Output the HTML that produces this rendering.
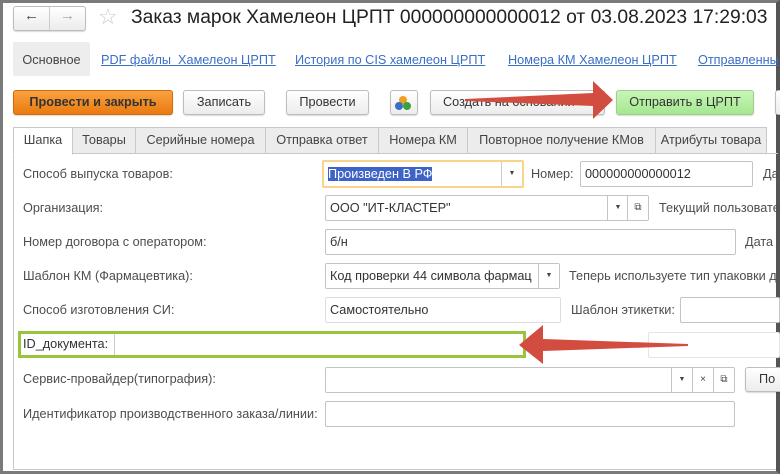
<!DOCTYPE html>
<html><head><meta charset="utf-8"><style>
*{box-sizing:border-box;margin:0;padding:0}
body{width:780px;height:474px;overflow:hidden;background:#fff;font-family:"Liberation Sans",Arial,sans-serif;font-size:12.7px;color:#4d4d4d;position:relative}
.a{position:absolute}
.frame{left:0;top:0;width:780px;height:474px;border:3px solid #7a7a7a;border-right:4px solid #555}
.btn{position:absolute;height:25px;border:1px solid #bdbdbd;border-radius:3px;background:linear-gradient(#fff,#ececec);text-align:center;line-height:23px;color:#333;font-size:12.7px;box-shadow:0 1px 1px rgba(0,0,0,.15);white-space:nowrap;overflow:hidden}
.lnk{position:absolute;top:53px;color:#3a6fc4;text-decoration:underline;font-size:12.7px;white-space:nowrap}
.tab{position:absolute;top:127px;height:27px;border:1px solid #c8c8c8;background:#ececec;line-height:25px;text-align:center;color:#444;white-space:nowrap}
.lbl{position:absolute;font-size:12.7px;color:#4d4d4d;white-space:nowrap}
.inp{position:absolute;height:26px;border:1px solid #c4c4c4;border-radius:2px;background:#fff;line-height:24px;padding-left:4px;color:#333;font-size:12.7px}
.dd{position:absolute;top:0;bottom:0;border-left:1px solid #c4c4c4;width:21px;text-align:center;font-size:7px;line-height:24px;color:#444}
</style></head><body>
<div class="a frame"></div>
<div class="btn" style="left:13px;top:6px;width:73px;height:25px"></div>
<div class="a" style="left:49px;top:7px;width:1px;height:23px;background:#ccc"></div>
<div class="a" style="left:24px;top:7px;font-size:15px;color:#444">&#8592;</div>
<div class="a" style="left:60px;top:7px;font-size:15px;color:#aaa">&#8594;</div>
<div class="a" style="left:98px;top:4px;font-size:22px;color:#ccc">&#9734;</div>
<div class="a" style="left:131px;top:7px;font-size:19.3px;color:#222;white-space:nowrap">Заказ марок Хамелеон ЦРПТ 000000000000012 от 03.08.2023 17:29:03</div>
<div class="a" style="left:13px;top:42px;width:77px;height:34px;background:#ededed;border-radius:2px;line-height:36px;text-align:center;color:#444">Основное</div>
<div class="lnk" style="left:101px">PDF файлы&nbsp; Хамелеон ЦРПТ</div>
<div class="lnk" style="left:295px">История по CIS хамелеон ЦРПТ</div>
<div class="lnk" style="left:508px">Номера КМ Хамелеон ЦРПТ</div>
<div class="lnk" style="left:698px">Отправленны</div>
<div class="btn" style="left:13px;top:90px;width:160px;background:linear-gradient(#f9a23f,#ea7a10);border-color:#d06c0a;font-weight:bold;color:#333">Провести и закрыть</div>
<div class="btn" style="left:183px;top:90px;width:82px">Записать</div>
<div class="btn" style="left:286px;top:90px;width:83px">Провести</div>
<div class="btn" style="left:390px;top:90px;width:28px"></div>
<div class="a" style="left:399px;top:96px;width:8px;height:8px;border-radius:50%;background:#f0a020"></div>
<div class="a" style="left:395px;top:102px;width:8px;height:8px;border-radius:50%;background:#3a6fc4"></div>
<div class="a" style="left:403px;top:102px;width:8px;height:8px;border-radius:50%;background:#3aa040"></div>
<div class="btn" style="left:430px;top:90px;width:175px;text-align:left;padding-left:12px">Создать на основании</div>
<div class="btn" style="left:616px;top:90px;width:138px;background:linear-gradient(#c8f5b8,#a5e890);border-color:#9bcf8a">Отправить в ЦРПТ</div>
<div class="btn" style="left:775px;top:90px;width:10px"></div>
<svg class="a" style="left:0;top:0" width="780" height="474">
<polygon points="465,99 593,93 593,81 613,100 593,119 593,106 465,101" fill="#d24d3f"/>
</svg>
<div class="a" style="left:13px;top:153px;width:1px;height:317px;background:#c8c8c8"></div>
<div class="a" style="left:13px;top:469px;width:763px;height:1px;background:#c8c8c8"></div>
<div class="tab" style="left:72px;width:64px">Товары</div>
<div class="tab" style="left:135px;width:131px">Серийные номера</div>
<div class="tab" style="left:265px;width:114px">Отправка ответ</div>
<div class="tab" style="left:378px;width:90px">Номера КМ</div>
<div class="tab" style="left:467px;width:189px">Повторное получение КМов</div>
<div class="tab" style="left:655px;width:112px">Атрибуты товара</div>
<div class="a" style="left:766px;top:153px;width:12px;height:1px;background:#c8c8c8"></div>
<div class="tab" style="left:13px;width:60px;background:#fff;border-bottom-color:#fff;height:28px">Шапка</div>

<div class="lbl" style="left:23px;top:167px">Способ выпуска товаров:</div>
<div class="inp" style="left:322px;top:160px;width:202px;height:28px;border:2px solid #f7d48a"><span style="background:#3d63c6;color:#fff">Произведен В РФ</span><div class="dd" style="right:0;border-left-color:#ccc">&#9660;</div></div>
<div class="lbl" style="left:531px;top:167px">Номер:</div>
<div class="inp" style="left:580px;top:161px;width:173px">000000000000012</div>
<div class="lbl" style="left:763px;top:167px">Да</div>

<div class="lbl" style="left:23px;top:201px">Организация:</div>
<div class="inp" style="left:325px;top:195px;width:324px">ООО "ИТ-КЛАСТЕР"<div class="dd" style="right:20px">&#9660;</div><div class="dd" style="right:0;font-size:10px">&#10697;</div></div>
<div class="lbl" style="left:659px;top:201px">Текущий пользовате</div>

<div class="lbl" style="left:23px;top:235px">Номер договора с оператором:</div>
<div class="inp" style="left:325px;top:229px;width:411px">б/н</div>
<div class="lbl" style="left:745px;top:235px">Дата</div>

<div class="lbl" style="left:23px;top:269px">Шаблон КМ (Фармацевтика):</div>
<div class="inp" style="left:325px;top:263px;width:235px;overflow:hidden;white-space:nowrap">Код проверки 44 символа фармац<div class="dd" style="right:0;background:#fff">&#9660;</div></div>
<div class="lbl" style="left:569px;top:269px">Теперь используете тип упаковки д</div>

<div class="lbl" style="left:23px;top:303px">Способ изготовления СИ:</div>
<div class="inp" style="left:325px;top:297px;width:236px;border-color:#ddd">Самостоятельно</div>
<div class="lbl" style="left:571px;top:303px">Шаблон этикетки:</div>
<div class="inp" style="left:680px;top:297px;width:100px"></div>

<div class="inp" style="left:648px;top:332px;width:132px;border-color:#e4e4e4"></div>
<div class="a" style="left:18px;top:331px;width:508px;height:27px;border:3px solid #9bc43c;background:#fff"></div>
<div class="lbl" style="left:23px;top:337px;color:#333">ID_документа:</div>
<div class="a" style="left:114px;top:334px;width:1px;height:21px;background:#ccc"></div>
<svg class="a" style="left:0;top:0" width="780" height="474">
<polygon points="688,344 543,339 543,325 519,345 543,364 543,351 688,346" fill="#d24d3f"/>
</svg>

<div class="lbl" style="left:23px;top:372px">Сервис-провайдер(типография):</div>
<div class="inp" style="left:325px;top:367px;width:410px"><div class="dd" style="right:42px">&#9660;</div><div class="dd" style="right:21px;font-size:10px">&#215;</div><div class="dd" style="right:0;font-size:10px">&#10697;</div></div>
<div class="btn" style="left:745px;top:367px;width:40px;text-align:left;padding-left:13px">По</div>

<div class="lbl" style="left:23px;top:407px">Идентификатор производственного заказа/линии:</div>
<div class="inp" style="left:325px;top:401px;width:410px"></div>
</body></html>
